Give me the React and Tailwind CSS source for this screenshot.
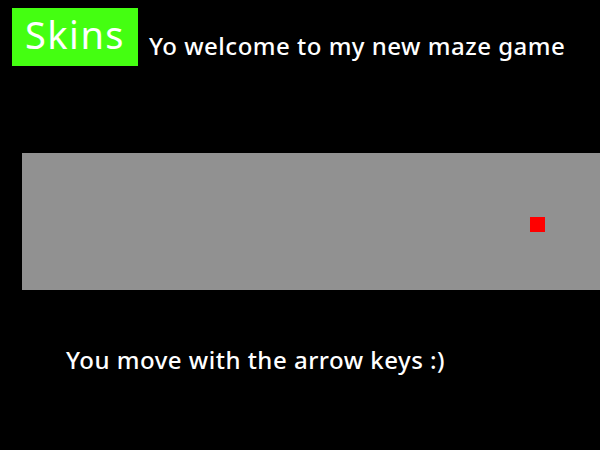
export default function App() {
  return (
    <div className="min-h-screen w-full bg-black text-white overflow-hidden" style={{ fontFamily: '"Noto Sans", sans-serif' }}>
      <div className="flex items-start pt-2 pl-3">
        <button className="w-[126px] h-[58px] bg-[#44ff11] text-white text-[38px] leading-none tracking-[1.5px] flex items-start justify-center pt-[7px]">
          Skins
        </button>
        <h1 className="ml-[11px] mt-[26px] text-[24px] leading-none font-medium tracking-[0.5px]">Yo welcome to my new maze game</h1>
      </div>

      <div className="relative ml-[22px] mt-[87px] h-[137px] bg-[#919191]">
        <div className="absolute left-[508px] top-[64px] w-[15px] h-[15px] bg-[#ff0000]" />
      </div>

      <p className="ml-[66px] mt-[58px] text-[24px] leading-none font-medium tracking-[0.5px]">You move with the arrow keys :)</p>
    </div>
  )
}
